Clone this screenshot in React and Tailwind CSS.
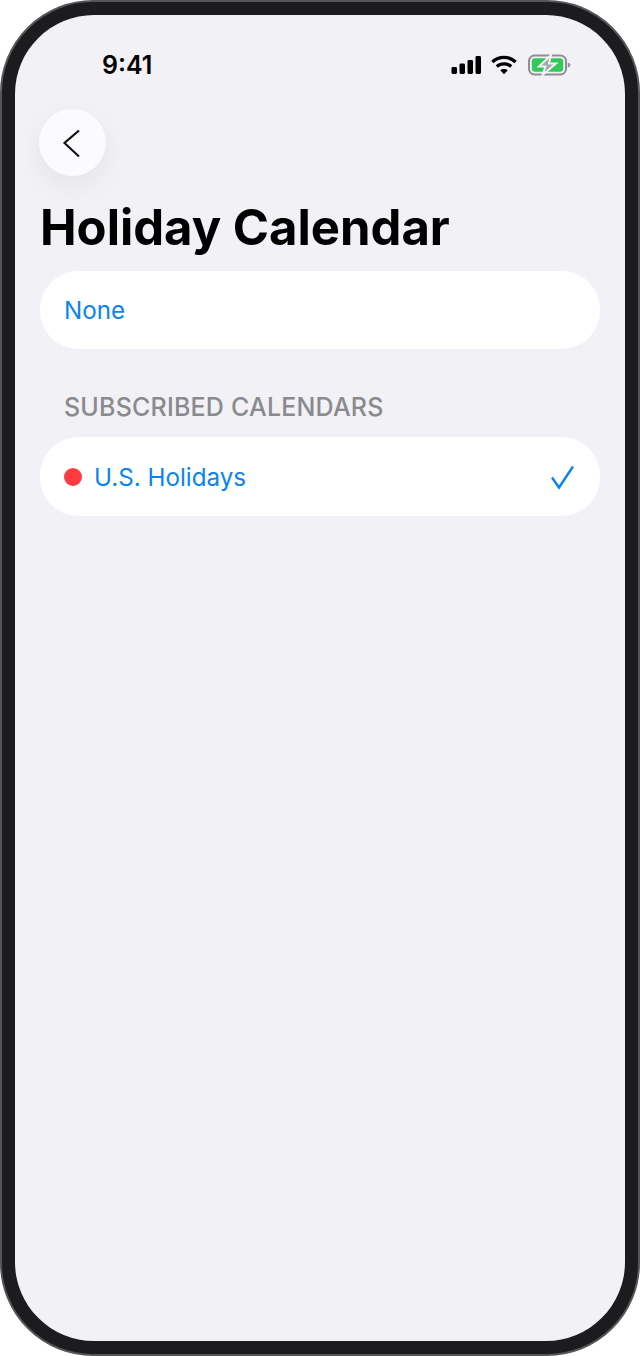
import React from 'react';

function StatusIcons() {
    return (
        <div className="flex items-center">
            <svg width="31" height="20" viewBox="0 0 31 20" fill="#000">
                <rect x="0.5" y="12" width="5.5" height="7" rx="1.4" />
                <rect x="8.5" y="8.5" width="5.5" height="10.5" rx="1.4" />
                <rect x="16.5" y="5" width="5.5" height="14" rx="1.4" />
                <rect x="24.5" y="1" width="5.5" height="18" rx="1.4" />
            </svg>
            <svg className="ml-[9px] mr-[11px]" width="26" height="20" viewBox="0 0 26 20" fill="none" stroke="#000" strokeWidth="3.4">
                <path d="M1.4 7C8 0.8 18 0.8 24.6 7" />
                <path d="M5.8 11.6C9.8 8 16.2 8 20.2 11.6" />
                <path d="M13 19.2L9.2 15.2C11.2 13.6 14.8 13.6 16.8 15.2Z" fill="#000" stroke="none" />
            </svg>
            <svg width="43" height="22" viewBox="0 0 43 22" fill="none">
                <rect x="1" y="1.5" width="37" height="19" rx="5.5" stroke="#8e8e93" strokeWidth="2" />
                <rect x="3.8" y="4.2" width="31.4" height="13.6" rx="3.2" fill="#34c759" />
                <path d="M39.8 8.5C41.4 9 42.4 10 42.4 11C42.4 12 41.4 13 39.8 13.5Z" fill="#8e8e93" />
                <path d="M23 1L11 12.5H17.5L14.5 21L28 9.5H21Z" fill="#a6a6ab" stroke="#f1f1f6" strokeWidth="2" />
            </svg>
        </div>
    );
}

export default function App() {
    return (
        <div className="w-[640px] h-[1356px] bg-white font-['Inter',sans-serif]">
            <div className="h-full rounded-[93px] border-2 border-[#55555a] bg-[#1c1c1e] p-[13px]">
                <div className="h-full overflow-hidden rounded-[79px] bg-[#f1f1f6] px-[25px]">
                    {/* Status bar */}
                    <div className="flex h-[36px] mt-[32px] items-center justify-between pl-[62px] pr-[29px]">
                        <span className="text-[25px] font-semibold leading-none text-black">9:41</span>
                        <StatusIcons />
                    </div>

                    {/* Back */}
                    <button className="mt-[26px] -ml-px flex h-[67px] w-[67px] items-center justify-center rounded-full bg-[#fbfbfd] shadow-[0_10px_30px_rgba(0,0,0,0.06)]">
                        <svg width="20" height="30" viewBox="0 0 20 30" fill="none" stroke="#111" strokeWidth="2.2">
                            <path d="M16 2.5L1.5 15L16 28.5" />
                        </svg>
                    </button>

                    <h1 className="mt-[24px] text-[49px] font-bold leading-[56px] text-black whitespace-nowrap">Holiday Calendar</h1>

                    {/* None */}
                    <div className="mt-[15px] flex h-[78px] items-center rounded-[38px] bg-white pl-[24px] pr-[25px]">
                        <span className="text-[24.2px] text-[#0a84ee] translate-y-px">None</span>
                    </div>

                    <div className="mt-[41px] pl-[24px] text-[25px] font-medium leading-[34px] tracking-[0.2px] text-[#8a8a8e] whitespace-nowrap">SUBSCRIBED CALENDARS</div>

                    {/* Calendars */}
                    <div className="mt-[13px] flex h-[79px] items-center rounded-[38px] bg-white pl-[24px] pr-[25px]">
                        <span className="h-[18px] w-[18px] rounded-full bg-[#ff3b3f]" />
                        <span className="ml-[12px] text-[24.2px] text-[#0a84ee] translate-y-[2px]">U.S. Holidays</span>
                        <svg className="ml-auto" width="26" height="26" viewBox="0 0 26 26" fill="none" stroke="#0a84ee" strokeWidth="2.4">
                            <path d="M3 13.5L10 23.5L24 2.5" />
                        </svg>
                    </div>
                </div>
            </div>
        </div>
    );
}
